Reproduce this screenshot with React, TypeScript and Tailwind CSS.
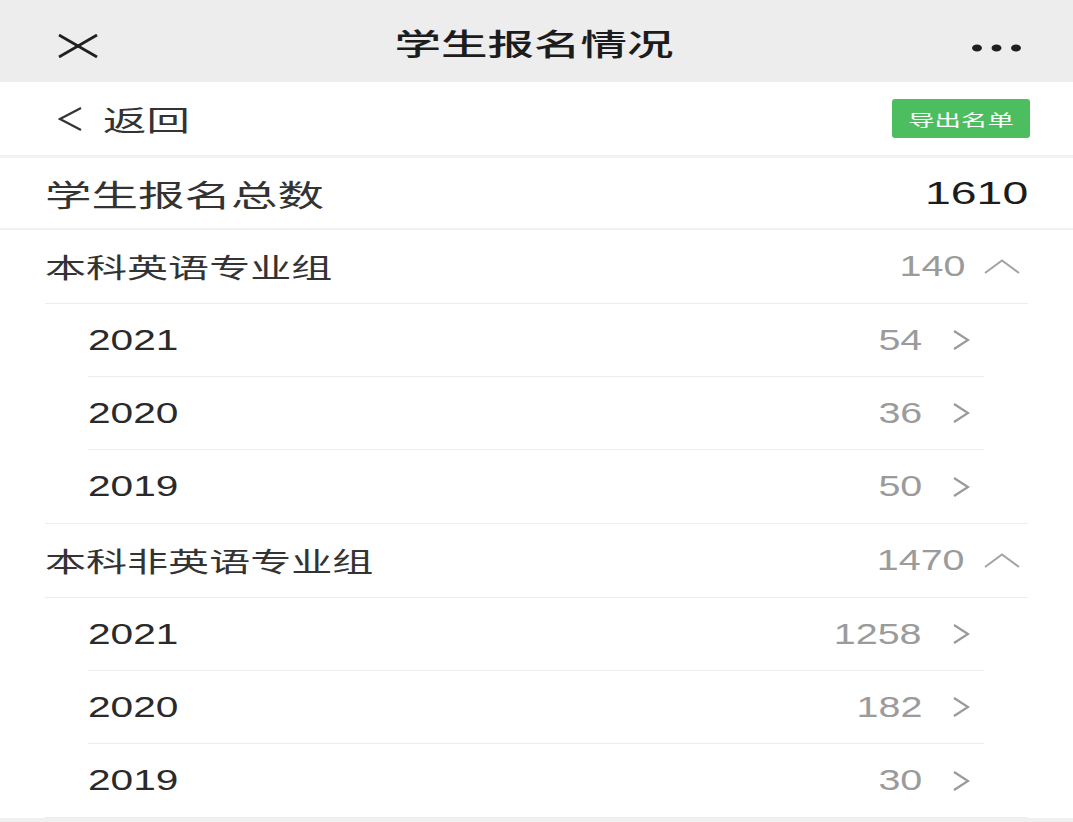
import React from 'react';

type Year = { year: string; count: number };
type Group = { name: string; total: number; years: Year[] };

const GROUPS: Group[] = [
  {
    name: '本科英语专业组',
    total: 140,
    years: [
      { year: '2021', count: 54 },
      { year: '2020', count: 36 },
      { year: '2019', count: 50 },
    ],
  },
  {
    name: '本科非英语专业组',
    total: 1470,
    years: [
      { year: '2021', count: 1258 },
      { year: '2020', count: 182 },
      { year: '2019', count: 30 },
    ],
  },
];

const cjk = "font-['Noto_Sans_CJK_SC','Noto_Sans',sans-serif]";
const num = "font-['Liberation_Sans',Arial,sans-serif]";

const ChevronRight = () => (
  <svg width="18" height="20" viewBox="0 0 18 20" fill="none" stroke="#9a9a9a" strokeWidth="2.2">
    <polyline points="2,1 16,10 2,19" />
  </svg>
);

const ChevronUp = () => (
  <svg width="36" height="15" viewBox="0 0 36 15" fill="none" stroke="#a3a3a3" strokeWidth="2">
    <polyline points="1,14 18,1.5 35,14" />
  </svg>
);

const Header = () => (
  <header className="h-[82px] bg-[#ededed] grid grid-cols-[1fr_auto_1fr] items-center">
    <div className="pl-[58px] pt-[10px]">
      <svg width="40" height="24" viewBox="0 0 40 24" fill="none" stroke="#1f1f1f" strokeWidth="2.8">
        <line x1="1" y1="1" x2="39" y2="23" />
        <line x1="39" y1="1" x2="1" y2="23" />
      </svg>
    </div>
    <h1 className={`${cjk} text-[30px] leading-none font-medium text-[#1c1c1c] pt-[2px] pr-[6px]`}>
      <span className="inline-block origin-center scale-x-[1.55]">学生报名情况</span>
    </h1>
    <div className="flex justify-end pr-[51px] pt-[14px]">
      <svg width="50" height="8" viewBox="0 0 50 8" fill="#1f1f1f">
        <ellipse cx="5" cy="4" rx="5" ry="3.5" />
        <ellipse cx="24.5" cy="4" rx="5" ry="3.5" />
        <ellipse cx="44" cy="4" rx="5" ry="3.5" />
      </svg>
    </div>
  </header>
);

const YearRow: React.FC<{ item: Year; last: boolean }> = ({ item, last }) => (
  <div
    className={`h-[73px] flex items-center justify-between pr-[14px] ${last ? '' : 'border-b border-[#ededed]'}`}
  >
    <span className={`${num} text-[29px] leading-none text-[#2a2a2a] inline-block origin-left scale-x-[1.4]`}>
      {item.year}
    </span>
    <div className="flex items-center gap-[30px]">
      <span className={`${num} text-[29px] leading-none text-[#9b9b9b] inline-block origin-right scale-x-[1.36]`}>
        {item.count}
      </span>
      <ChevronRight />
    </div>
  </div>
);

const GroupBlock: React.FC<{ group: Group }> = ({ group }) => (
  <section className="mx-[45px] border-b border-[#ededed]">
    <div className="h-[74px] flex items-center justify-between pr-[8px] border-b border-[#ededed]">
      <span className={`${cjk} text-[27px] leading-none text-[#333] inline-block origin-left scale-x-[1.52]`}>
        {group.name}
      </span>
      <div className="flex items-center gap-[19px]">
        <span className={`${num} text-[29px] leading-none text-[#9b9b9b] inline-block origin-right scale-x-[1.36]`}>
          {group.total}
        </span>
        <ChevronUp />
      </div>
    </div>
    <div className="ml-[43px] mr-[44px]">
      {group.years.map((y, i) => (
        <YearRow key={y.year} item={y} last={i === group.years.length - 1} />
      ))}
    </div>
  </section>
);

export default function App() {
  const total = GROUPS.reduce((s, g) => s + g.total, 0);
  return (
    <div className="min-h-screen bg-[#f0f0f0]">
      <Header />
      <div className="bg-white">
        <div className="h-[73px] flex items-center justify-between pl-[58px] pr-[43px]">
          <div className="flex items-center gap-[20px]">
            <svg width="25" height="24" viewBox="0 0 25 24" fill="none" stroke="#333" strokeWidth="2.2">
              <polyline points="23,1 2,12 23,23" />
            </svg>
            <span className={`${cjk} text-[28px] leading-none text-[#333] inline-block origin-left scale-x-[1.55]`}>
              返回
            </span>
          </div>
          <button className="w-[138px] h-[39px] rounded-[3px] bg-[#4cbe5f] flex items-center justify-center">
            <span className={`${cjk} text-[16px] leading-none text-white inline-block origin-center scale-x-[1.65]`}>
              导出名单
            </span>
          </button>
        </div>
        <div className="h-[3px] bg-[#f2f2f2]" />
        <div className="h-[72px] flex items-center justify-between px-[45px] border-b-2 border-[#f0f0f0]">
          <span className={`${cjk} text-[30px] leading-none text-[#333] inline-block origin-left scale-x-[1.55]`}>
            学生报名总数
          </span>
          <span className={`${num} text-[32px] leading-none text-[#1c1c1c] inline-block origin-right scale-x-[1.45]`}>
            {total}
          </span>
        </div>
        {GROUPS.map(g => (
          <GroupBlock key={g.name} group={g} />
        ))}
      </div>
    </div>
  );
}
